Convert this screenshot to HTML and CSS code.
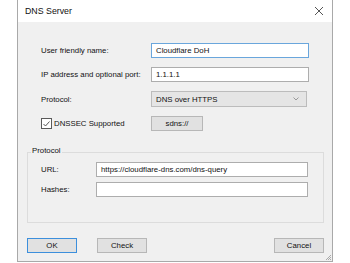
FILE: index.html
```html
<!DOCTYPE html>
<html lang="en">
<head>
    <meta charset="UTF-8">
    <title>DNS Server</title>
    <link rel="stylesheet" href="styles.css">
</head>
<body>

<div class="dialog">
    <div class="titlebar">
        <span class="title">DNS Server</span>
        <svg class="close" width="10" height="10" viewBox="0 0 10 10">
            <path d="M1 1 L9 9 M9 1 L1 9" stroke="#555" stroke-width="1" fill="none"/>
        </svg>
    </div>

    <div class="content">
        <div class="form-grid">
            <label class="row-label">User friendly name:</label>
            <div class="field focused">Cloudflare DoH</div>

            <label class="row-label">IP address and optional port:</label>
            <div class="field">1.1.1.1</div>

            <label class="row-label">Protocol:</label>
            <div class="select">
                <span>DNS over HTTPS</span>
                <svg width="6" height="4" viewBox="0 0 6 4">
                    <path d="M0.5 0.5 L3 3 L5.5 0.5" stroke="#999" stroke-width="1" fill="none"/>
                </svg>
            </div>

            <label class="check-label">
                <span class="checkbox">
                    <svg width="9" height="8" viewBox="0 0 9 8">
                        <path d="M1.5 4 L3.5 6 L7.5 1.5" stroke="#444" stroke-width="0.9" fill="none"/>
                    </svg>
                </span>
                DNSSEC Supported
            </label>
            <div><button class="button small-btn">sdns://</button></div>
        </div>

        <div class="group">
            <span class="group-label">Protocol</span>
            <div class="group-grid">
                <label class="row-label">URL:</label>
                <div class="field">https://cloudflare-dns.com/dns-query</div>

                <label class="row-label">Hashes:</label>
                <div class="field"></div>
            </div>
        </div>

        <div class="buttons-container">
            <button class="button default-btn">OK</button>
            <button class="button">Check</button>
            <span class="spacer"></span>
            <button class="button">Cancel</button>
        </div>
    </div>

    <svg class="grip" width="7" height="7" viewBox="0 0 7 7">
        <path d="M6 1 L1 6 M6 3 L3 6 M6 5 L5 6" stroke="#aaa" stroke-width="1" fill="none"/>
    </svg>
</div>

</body>
</html>
```

FILE: styles.css
```css
/* tampilan umum */
body {
    font-family: "Liberation Sans", Arial, sans-serif;
    font-size: 7.8px;
    color: #111;
    background-color: #ffffff;
    margin: 0;
    padding: 0;
}
.dialog {
    position: relative;
    margin-left: 17px;
    width: 316px;
    height: 262px;
    border: 1px solid #a9a9a9;
    border-top: none;
    box-sizing: border-box;
    background-color: #f0f0f0;
}
.titlebar {
    height: 22px;
    background-color: #ffffff;
    display: flex;
    align-items: center;
    justify-content: space-between;
    padding: 0 8px 0 7px;
}
.title {
    font-size: 8.8px;
    color: #111;
}
.close {
    display: block;
}
.content {
    padding: 21px 8px 0 9px;
}
.form-grid {
    display: grid;
    grid-template-columns: 110px 158px;
    row-gap: 9px;
    align-items: center;
    padding-left: 14px;
}
.field {
    height: 15px;
    box-sizing: border-box;
    border: 1px solid #adadad;
    background-color: #ffffff;
    padding: 0 4px;
    line-height: 13px;
    white-space: nowrap;
    overflow: hidden;
}
.field.focused {
    border-color: #6aa6dc;
}
.select {
    height: 16px;
    width: 156px;
    box-sizing: border-box;
    border: 1px solid #bcbcbc;
    background-color: #e5e5e5;
    padding: 0 7px 0 4px;
    display: flex;
    align-items: center;
    justify-content: space-between;
}
.check-label {
    display: flex;
    align-items: center;
    gap: 2px;
}
.checkbox {
    width: 11px;
    height: 11px;
    box-sizing: border-box;
    border: 1px solid #5a5a5a;
    background-color: #ffffff;
    display: flex;
    align-items: center;
    justify-content: center;
}
.button {
    font-family: "Liberation Sans", Arial, sans-serif;
    font-size: 7.8px;
    color: #111;
    width: 50px;
    height: 15px;
    padding: 0;
    box-sizing: border-box;
    border: 1px solid #b7b7b7;
    background-color: #e1e1e1;
}
.small-btn {
    width: 52px;
}
.default-btn {
    border-color: #3c8fdc;
}

/* kotak grup protocol */
.group {
    position: relative;
    margin-top: 21px;
    height: 71px;
    box-sizing: border-box;
    border: 1px solid #dcdcdc;
    padding: 9px 14px 0 13px;
}
.group-label {
    position: absolute;
    top: -7px;
    left: 3px;
    padding: 0 1px;
    background-color: #f0f0f0;
}
.group-grid {
    display: grid;
    grid-template-columns: 55px 212px;
    row-gap: 5px;
    align-items: center;
}
.buttons-container {
    display: flex;
    gap: 20px;
    margin-top: 15px;
}
.spacer {
    flex: 1;
}
.grip {
    position: absolute;
    right: 0;
    bottom: 0;
}
```
